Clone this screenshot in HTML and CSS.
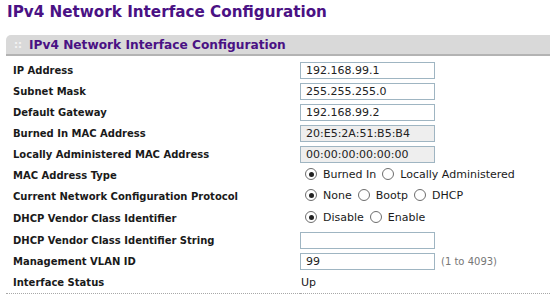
FILE: index.html
```html
<!DOCTYPE html>
<html>
<head>
<meta charset="utf-8">
<link rel="stylesheet" href="styles.css">
</head>
<body>
<div class="page">
  <h1 class="title">IPv4 Network Interface Configuration</h1>
  <div class="panel">
    <div class="bar"><span class="grip">::</span><span class="bar-title">IPv4 Network Interface Configuration</span></div>
    <table class="form">
      <tr class="r21"><td class="lbl">IP Address</td><td class="val"><span class="inp">192.168.99.1</span></td></tr>
      <tr class="r21"><td class="lbl">Subnet Mask</td><td class="val"><span class="inp">255.255.255.0</span></td></tr>
      <tr class="r21"><td class="lbl">Default Gateway</td><td class="val"><span class="inp">192.168.99.2</span></td></tr>
      <tr class="r21"><td class="lbl">Burned In MAC Address</td><td class="val"><span class="inp ro">20:E5:2A:51:B5:B4</span></td></tr>
      <tr class="r21"><td class="lbl">Locally Administered MAC Address</td><td class="val"><span class="inp ro">00:00:00:00:00:00</span></td></tr>
      <tr class="r21"><td class="lbl">MAC Address Type</td><td class="val"><span class="radios"><span class="rb on"></span><span class="rt">Burned In</span><span class="rb"></span><span class="rt">Locally Administered</span></span></td></tr>
      <tr class="r21"><td class="lbl">Current Network Configuration Protocol</td><td class="val"><span class="radios"><span class="rb on"></span><span class="rt">None</span><span class="rb"></span><span class="rt">Bootp</span><span class="rb"></span><span class="rt">DHCP</span></span></td></tr>
      <tr class="r23"><td class="lbl">DHCP Vendor Class Identifier</td><td class="val"><span class="radios"><span class="rb on"></span><span class="rt">Disable</span><span class="rb"></span><span class="rt">Enable</span></span></td></tr>
      <tr class="r21"><td class="lbl">DHCP Vendor Class Identifier String</td><td class="val"><span class="inp"></span></td></tr>
      <tr class="r21"><td class="lbl">Management VLAN ID</td><td class="val"><span class="inp">99</span><span class="hint">(1 to 4093)</span></td></tr>
      <tr class="r21 last"><td class="lbl">Interface Status</td><td class="val"><span class="txt">Up</span></td></tr>
    </table>
  </div>
</div>
</body>
</html>
```
FILE: styles.css
```css
html, body {
  margin: 0;
  padding: 0;
  background: #ffffff;
}
.page {
  width: 550px;
  height: 307px;
  overflow: hidden;
  font-family: "DejaVu Sans", Verdana, sans-serif;
}
.title {
  margin: 0;
  padding: 3px 0 0 7px;
  height: 32px;
  box-sizing: border-box;
  font-size: 15.2px;
  font-weight: bold;
  color: #4a1184;
}
.panel {
  margin-left: 6px;
}
.bar {
  height: 21px;
  margin-top: 3px;
  background: #d9d9d9;
  border-bottom: 2px solid #b3b3b3;
  border-top-left-radius: 5px;
  display: flex;
  align-items: center;
  box-sizing: border-box;
}
.grip {
  color: #f4f4f4;
  font-size: 10px;
  font-weight: bold;
  width: 23px;
  padding-left: 8px;
  box-sizing: border-box;
}
.bar-title {
  font-size: 12.2px;
  font-weight: bold;
  color: #4a1184;
}
.form {
  border-collapse: collapse;
  width: 544px;
  margin-top: 4px;
  table-layout: fixed;
}
.form td {
  padding: 0;
  vertical-align: middle;
}
.r21 { height: 21px; }
.r22 { height: 22px; }
.r23 { height: 23px; }
.last td {
  border-bottom: 1px dotted #a8a8a8;
}
.lbl {
  width: 294px;
  padding-left: 7px !important;
  box-sizing: border-box;
  font-size: 10px;
  font-weight: bold;
  color: #1a1a1a;
  white-space: nowrap;
}
.val {
  font-size: 11px;
  color: #1a1a1a;
  white-space: nowrap;
}
.inp {
  display: inline-block;
  vertical-align: middle;
  width: 135px;
  height: 17px;
  box-sizing: border-box;
  border: 1px solid #9fb5c2;
  background: #ffffff;
  padding-left: 5px;
  line-height: 15px;
  font-size: 11px;
  color: #222;
}
.inp.ro {
  background: #eeeeee;
}
.hint {
  display: inline-block;
  vertical-align: middle;
  margin-left: 6px;
  font-size: 10px;
  color: #777;
}
.txt {
  padding-left: 1px;
}
.radios {
  display: inline-flex;
  align-items: center;
  padding-left: 5px;
}
.rb {
  width: 12px;
  height: 12px;
  border: 1px solid #6d6d6d;
  border-radius: 50%;
  box-sizing: border-box;
  position: relative;
  background: #fff;
  margin-right: 6px;
}
.rb.on::after {
  content: "";
  position: absolute;
  left: 2.5px;
  top: 2.5px;
  width: 5px;
  height: 5px;
  border-radius: 50%;
  background: #222;
}
.rt {
  margin-right: 6px;
}
```
